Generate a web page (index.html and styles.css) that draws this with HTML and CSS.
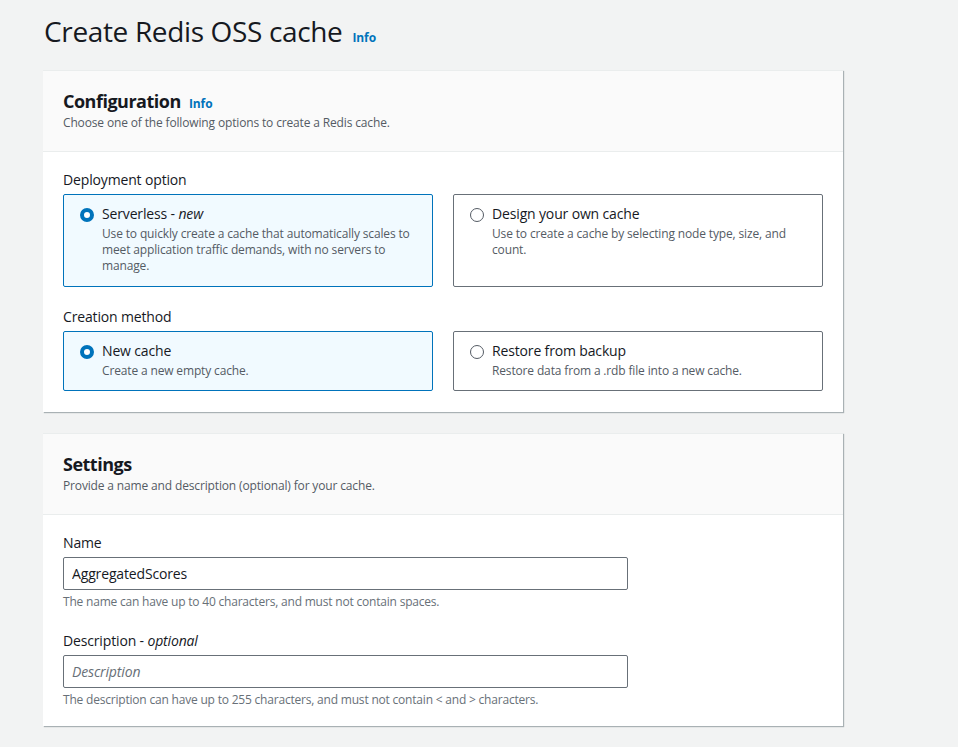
FILE: index.html
```html
<!DOCTYPE html>
<html lang="en">
<head>
<meta charset="utf-8">
<title>Create Redis OSS cache</title>
<link rel="stylesheet" href="styles.css">
</head>
<body>
<div class="page">
  <h1 class="title">Create Redis OSS cache <a class="info info-title" href="#">Info</a></h1>

  <section class="panel panel-config">
    <header class="panel-head">
      <h2 class="panel-title">Configuration <a class="info" href="#">Info</a></h2>
      <p class="panel-desc">Choose one of the following options to create a Redis cache.</p>
    </header>
    <div class="panel-body">
      <div class="field">
        <div class="label">Deployment option</div>
        <div class="tiles">
          <div class="tile tile-lg selected">
            <span class="radio on"></span>
            <div class="tile-text">
              <div class="tile-label">Serverless - <em>new</em></div>
              <div class="tile-desc">Use to quickly create a cache that automatically scales to meet application traffic demands, with no servers to manage.</div>
            </div>
          </div>
          <div class="tile tile-lg">
            <span class="radio"></span>
            <div class="tile-text">
              <div class="tile-label">Design your own cache</div>
              <div class="tile-desc">Use to create a cache by selecting node type, size, and count.</div>
            </div>
          </div>
        </div>
      </div>
      <div class="field">
        <div class="label">Creation method</div>
        <div class="tiles">
          <div class="tile selected">
            <span class="radio on"></span>
            <div class="tile-text">
              <div class="tile-label">New cache</div>
              <div class="tile-desc">Create a new empty cache.</div>
            </div>
          </div>
          <div class="tile">
            <span class="radio"></span>
            <div class="tile-text">
              <div class="tile-label">Restore from backup</div>
              <div class="tile-desc">Restore data from a .rdb file into a new cache.</div>
            </div>
          </div>
        </div>
      </div>
    </div>
  </section>

  <section class="panel panel-settings">
    <header class="panel-head">
      <h2 class="panel-title">Settings</h2>
      <p class="panel-desc">Provide a name and description (optional) for your cache.</p>
    </header>
    <div class="panel-body">
      <div class="field">
        <div class="label">Name</div>
        <input class="input" type="text" value="AggregatedScores">
        <div class="help">The name can have up to 40 characters, and must not contain spaces.</div>
      </div>
      <div class="field">
        <div class="label">Description - <em>optional</em></div>
        <input class="input" type="text" placeholder="Description">
        <div class="help">The description can have up to 255 characters, and must not contain &lt; and &gt; characters.</div>
      </div>
    </div>
  </section>
</div>
</body>
</html>
```

FILE: styles.css
```css
* { box-sizing: border-box; }
html, body { margin: 0; padding: 0; }
body {
  background: #f2f3f3;
  font-family: "Open Sans", "Noto Sans", sans-serif;
  color: #16191f;
}
.page {
  width: 800px;
  margin-left: 43px;
  padding-top: 12px;
}
.title {
  margin: 0 0 20px 1px;
  font-size: 28px;
  font-weight: 400;
  line-height: 38px;
  letter-spacing: -0.35px;
}
.info {
  color: #0073bb;
  font-size: 12px;
  font-weight: 700;
  line-height: 1;
  text-decoration: none;
  letter-spacing: -0.1px;
  margin-left: 3px;
}
.panel {
  background: #fff;
  border-top: 1px solid #eaeded;
  box-shadow: 1px 1px 1px 0 rgba(0, 28, 36, 0.3);
  margin-bottom: 21px;
}
.panel-head {
  background: #fafafa;
  border-bottom: 1px solid #eaeded;
  padding: 18px 20px 19px;
}
.panel-title {
  margin: 0;
  font-size: 18px;
  font-weight: 700;
  line-height: 24px;
  letter-spacing: -0.5px;
}
.panel-title .info { margin-left: 4px; }
.panel-desc {
  margin: 0;
  font-size: 12px;
  line-height: 18px;
  color: #545b64;
  letter-spacing: -0.15px;
  padding-top: 1px;
}
.panel-body {
  padding: 18px 20px 20px;
  display: flex;
  flex-direction: column;
  gap: 20px;
}
.panel-config .panel-body { padding-bottom: 21px; }
.panel-settings .panel-body { padding-bottom: 18px; gap: 21px; }
.label {
  font-size: 14px;
  line-height: 20px;
  margin-bottom: 4px;
  letter-spacing: -0.15px;
}
.tiles {
  display: grid;
  grid-template-columns: 370px 370px;
  gap: 20px;
}
.tile {
  border: 1px solid #687078;
  border-radius: 2px;
  padding: 9px 20px 10px 16px;
  display: flex;
  align-items: flex-start;
  gap: 8px;
  min-height: 60px;
}
.tile-lg { min-height: 93px; }
.tile.selected {
  background: #f1faff;
  border-color: #0073bb;
}
.radio {
  flex: none;
  width: 14px;
  height: 14px;
  border-radius: 50%;
  border: 1px solid #545b64;
  margin-top: 4px;
  background: #fff;
}
.radio.on {
  border: 4px solid #0073bb;
}
.tile-label {
  font-size: 14px;
  line-height: 20px;
  letter-spacing: -0.15px;
}
.tile-desc {
  font-size: 12px;
  line-height: 16px;
  color: #545b64;
  margin-top: 2px;
  letter-spacing: -0.15px;
}
.input {
  display: block;
  width: 565px;
  height: 33px;
  border: 1px solid #687078;
  border-radius: 2px;
  padding: 4px 8px;
  font-family: inherit;
  font-size: 14px;
  letter-spacing: -0.15px;
  color: #16191f;
  background: #fff;
  margin: 0;
}
.input::placeholder {
  color: #687078;
  font-style: italic;
}
.help {
  font-size: 12px;
  line-height: 16px;
  color: #687078;
  margin-top: 4px;
  letter-spacing: -0.2px;
}
```
